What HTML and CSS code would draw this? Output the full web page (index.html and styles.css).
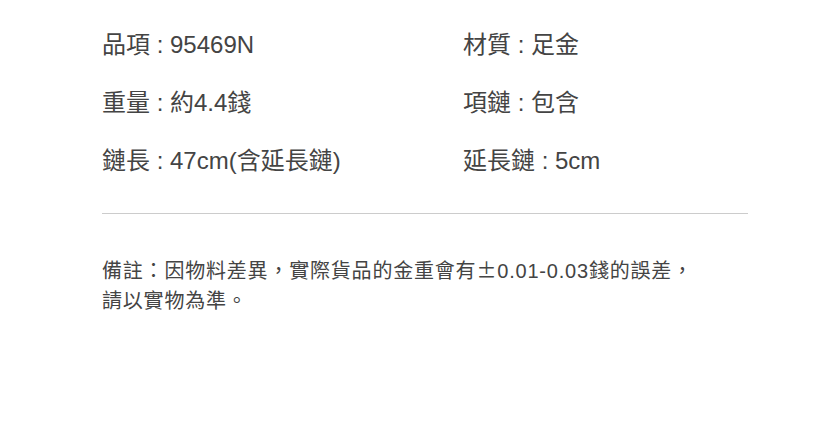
FILE: index.html
```html
<!DOCTYPE html>
<html lang="zh-Hant">
<head>
    <meta charset="UTF-8">
    <meta name="viewport" content="width=device-width, initial-scale=1.0">
    <title>商品規格</title>
    <link rel="stylesheet" href="styles.css">
</head>
<body>

    <div class="container">
        <div class="spec-list">
            <div class="spec">品項 : 95469N</div>
            <div class="spec">材質 : 足金</div>
            <div class="spec">重量 : 約4.4錢</div>
            <div class="spec">項鏈 : 包含</div>
            <div class="spec">鏈長 : 47cm(含延長鏈)</div>
            <div class="spec">延長鏈 : 5cm</div>
        </div>
        <div class="note">
            <p>備註：因物料差異，實際貨品的金重會有<span class="cjk">±</span>0.01-0.03錢的誤差，</p>
            <p>請以實物為準。</p>
        </div>
    </div>

</body>
</html>
```

FILE: styles.css
```css
body {
    font-family: "Liberation Sans", "Noto Sans CJK TC", sans-serif;
    background-color: #fff;
    color: #444;
    margin: 0;
    padding: 0;
}
.container {
    width: 646px;
    margin: 0 0 0 102px;
    padding-top: 28px;
}
.spec-list {
    display: grid;
    grid-template-columns: 361px 1fr;
    row-gap: 24px;
    padding-bottom: 35px;
    border-bottom: 1px solid #ccc;
}
.spec {
    font-size: 24px;
    line-height: 34px;
}
.note {
    padding-top: 41px;
}
.note p {
    margin: 0;
    font-size: 20px;
    line-height: 30px;
    letter-spacing: 0.8px;
}
.cjk {
    font-family: "Noto Sans CJK TC", sans-serif;
}
```
